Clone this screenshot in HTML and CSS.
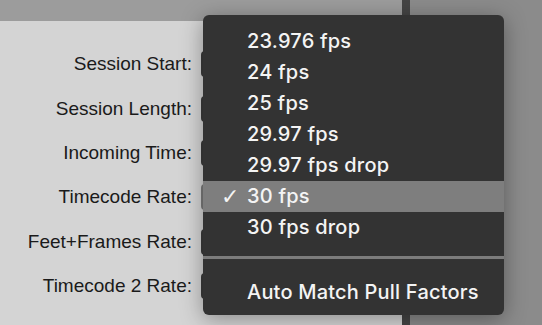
FILE: index.html
```html
<!DOCTYPE html>
<html lang="en">
<head>
    <meta charset="UTF-8">
    <title>Session Setup - Timecode Rate</title>
    <link rel="stylesheet" href="styles.css">
</head>
<body>
    <div class="window">
        <div class="setup">
            <div class="toolbar"></div>
            <div class="form">
                <div class="row"><span class="label">Session Start:</span><span class="field"></span></div>
                <div class="row"><span class="label">Session Length:</span><span class="field"></span></div>
                <div class="row"><span class="label">Incoming Time:</span><span class="field"></span></div>
                <div class="row"><span class="label">Timecode Rate:</span><span class="field active"></span></div>
                <div class="row"><span class="label">Feet+Frames Rate:</span><span class="field"></span></div>
                <div class="row"><span class="label">Timecode 2 Rate:</span><span class="field"></span></div>
            </div>
        </div>
        <div class="divider"></div>
        <div class="side"></div>
    </div>

    <!-- popup menu for the timecode rate -->
    <ul class="menu">
        <li>23.976 fps</li>
        <li>24 fps</li>
        <li>25 fps</li>
        <li>29.97 fps</li>
        <li>29.97 fps drop</li>
        <li class="selected"><span class="check">✓</span>30 fps</li>
        <li>30 fps drop</li>
        <li class="separator"></li>
        <li>Auto Match Pull Factors</li>
    </ul>
</body>
</html>
```

FILE: styles.css
```css
body {
    margin: 0;
    width: 542px;
    height: 325px;
    overflow: hidden;
    background-color: #8b8b8b;
    font-family: "Liberation Sans", Arial, sans-serif;
}
.window {
    display: flex;
    height: 325px;
}
.setup {
    width: 402px;
    display: flex;
    flex-direction: column;
}
.toolbar {
    height: 21px;
    background-color: #9c9c9c;
}
.form {
    flex: 1;
    background-color: #d4d4d4;
    padding-top: 21px;
}
.row {
    display: flex;
    align-items: center;
    height: 44.4px;
}
.label {
    width: 192px;
    text-align: right;
    font-size: 19px;
    color: #1a1a1a;
}
.field {
    margin-left: 9px;
    width: 180px;
    height: 26px;
    background-color: #3a3a3a;
    border-radius: 4px;
}
.field.active {
    background-color: #7a7a7a;
}
.divider {
    width: 8px;
    background-color: #454545;
}
.side {
    flex: 1;
    background-color: #8b8b8b;
}
.menu {
    position: absolute;
    left: 203px;
    top: 15px;
    width: 301px;
    height: 300px;
    box-sizing: border-box;
    margin: 0;
    padding: 11px 0 0;
    list-style: none;
    background-color: #333333;
    border-radius: 6px;
    box-shadow: 0 4px 22px rgba(0, 0, 0, 0.35);
    font-family: Inter, "Noto Sans", sans-serif;
    font-size: 20px;
    font-weight: 500;
    letter-spacing: 0.2px;
    color: #f4f4f4;
}
.menu li {
    position: relative;
    height: 31px;
    line-height: 31px;
    padding-left: 44px;
}
.menu li.selected {
    background-color: #7e7e7e;
}
.check {
    position: absolute;
    left: 18px;
    font-family: "DejaVu Sans", sans-serif;
    font-size: 22px;
    font-weight: bold;
}
.menu li.separator {
    height: 3px;
    margin: 13px 0 18px;
    padding: 0;
    background-color: #7c7c7c;
}
```
